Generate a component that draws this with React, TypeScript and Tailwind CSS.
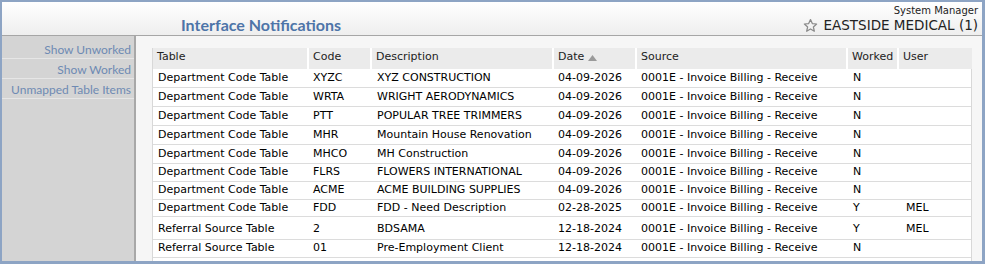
import React from "react";

const rows: { table: string; code: string; desc: string; date: string; worked: string; user: string; h: string }[] = [
  { table: "Department Code Table", code: "XYZC", desc: "XYZ CONSTRUCTION", date: "04-09-2026", worked: "N", user: "", h: "h-[19px]" },
  { table: "Department Code Table", code: "WRTA", desc: "WRIGHT AERODYNAMICS", date: "04-09-2026", worked: "N", user: "", h: "h-[19px]" },
  { table: "Department Code Table", code: "PTT", desc: "POPULAR TREE TRIMMERS", date: "04-09-2026", worked: "N", user: "", h: "h-[19px]" },
  { table: "Department Code Table", code: "MHR", desc: "Mountain House Renovation", date: "04-09-2026", worked: "N", user: "", h: "h-[19px]" },
  { table: "Department Code Table", code: "MHCO", desc: "MH Construction", date: "04-09-2026", worked: "N", user: "", h: "h-[19px]" },
  { table: "Department Code Table", code: "FLRS", desc: "FLOWERS INTERNATIONAL", date: "04-09-2026", worked: "N", user: "", h: "h-[18px]" },
  { table: "Department Code Table", code: "ACME", desc: "ACME BUILDING SUPPLIES", date: "04-09-2026", worked: "N", user: "", h: "h-[18px]" },
  { table: "Department Code Table", code: "FDD", desc: "FDD - Need Description", date: "02-28-2025", worked: "Y", user: "MEL", h: "h-[17px]" },
  { table: "Referral Source Table", code: "2", desc: "BDSAMA", date: "12-18-2024", worked: "Y", user: "MEL", h: "h-[23px] pt-[3px]" },
  { table: "Referral Source Table", code: "01", desc: "Pre-Employment Client", date: "12-18-2024", worked: "N", user: "", h: "h-[18px]" },
];

const grid = "grid grid-cols-[156px_63px_182px_83px_211px_51px_73px]";

function Star() {
  return (
    <svg width="15" height="15" viewBox="0 0 24 24" fill="none" stroke="#8a8a8a" strokeWidth="2" strokeLinejoin="round">
      <polygon points="12,2.5 14.9,8.9 21.8,9.6 16.6,14.3 18.1,21.2 12,17.6 5.9,21.2 7.4,14.3 2.2,9.6 9.1,8.9" />
    </svg>
  );
}

export default function App() {
  return (
    <div className="w-[985px] h-[264px] border-l-2 border-t-2 border-r-[3px] border-b-[3px] border-[#8da4c4] flex flex-col bg-white overflow-hidden">
      <div className="h-[34px] shrink-0 bg-gradient-to-b from-white to-[#eeeeee] border-b border-[#a6a6a6] flex justify-between">
        <div className="pl-[179px] pt-[15px] text-[16px] font-bold text-[#4d74a8] leading-none" style={{ fontFamily: 'Lato, sans-serif' }}>
          Interface Notifications
        </div>
        <div className="flex flex-col items-end pr-[4px] pt-[3px]" style={{ fontFamily: '"DejaVu Sans", sans-serif' }}>
          <div className="text-[10px] leading-[12px] text-[#222]">System Manager</div>
          <div className="flex items-center gap-[6px] text-[13.5px] leading-[16px] text-[#222]">
            <Star />
            <span>EASTSIDE MEDICAL (1)</span>
          </div>
        </div>
      </div>
      <div className="flex flex-1 min-h-0">
        <div className="w-[134px] shrink-0 bg-[#d4d4d4] border-r-2 border-[#a8a8a8] pt-[3px]" style={{ fontFamily: 'Lato, sans-serif' }}>
          {["Show Unworked", "Show Worked", "Unmapped Table Items"].map((t) => (
            <div key={t} className="h-[20px] border-b border-[#e6e6e6] text-right pr-[3px] pt-[4px] text-[12px] leading-[14px] text-[#6e8ab3] whitespace-nowrap">
              {t}
            </div>
          ))}
        </div>
        <div className="flex-1 bg-[#f6f6f6] pl-[16px] pt-[12px] pr-[10px]" style={{ fontFamily: '"DejaVu Sans", sans-serif' }}>
          <div className="w-[820px] bg-white border-l border-r border-[#d8d8d8] text-[11px] text-black">
            <div className={`${grid} h-[21px]`}>
              {["Table", "Code", "Description", "Date", "Source", "Worked", "User"].map((h, i) => (
                <div key={h} className={`bg-[#ebebeb] ${i < 6 ? "border-r-2 border-white" : ""} pl-[4px] pb-[2px] text-[#222] flex items-center gap-[4px]`}>
                  {h}
                  {h === "Date" && (
                    <svg width="9" height="6" viewBox="0 0 9 6">
                      <polygon points="0,6 4.5,0 9,6" fill="#9a9a9a" />
                    </svg>
                  )}
                </div>
              ))}
            </div>
            {rows.map((r, i) => (
              <div key={i} className={`${grid} ${r.h} border-b border-[#dcdcdc] items-center`}>
                <div className="pl-[5px]">{r.table}</div>
                <div className="pl-[4px]">{r.code}</div>
                <div className="pl-[5px]">{r.desc}</div>
                <div className="pl-[4px]">{r.date}</div>
                <div className="pl-[4px]">0001E - Invoice Billing - Receive</div>
                <div className="pl-[5px]">{r.worked}</div>
                <div className="pl-[7px]">{r.user}</div>
              </div>
            ))}
            <div className="h-[3px]" />
          </div>
        </div>
      </div>
    </div>
  );
}
